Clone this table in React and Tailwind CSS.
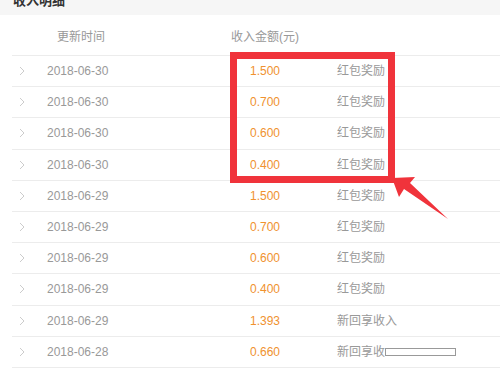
import React from "react";

const rows = [
  { date: "2018-06-30", amount: "1.500", label: "红包奖励" },
  { date: "2018-06-30", amount: "0.700", label: "红包奖励" },
  { date: "2018-06-30", amount: "0.600", label: "红包奖励" },
  { date: "2018-06-30", amount: "0.400", label: "红包奖励" },
  { date: "2018-06-29", amount: "1.500", label: "红包奖励" },
  { date: "2018-06-29", amount: "0.700", label: "红包奖励" },
  { date: "2018-06-29", amount: "0.600", label: "红包奖励" },
  { date: "2018-06-29", amount: "0.400", label: "红包奖励" },
  { date: "2018-06-29", amount: "1.393", label: "新回享收入" },
  { date: "2018-06-28", amount: "0.660", label: "新回享收", cut: true },
];

function Chevron() {
  return (
    <svg width="6" height="10" viewBox="0 0 6 10" className="shrink-0">
      <path d="M1 1 L5 5 L1 9" fill="none" stroke="#cccccc" strokeWidth="1" />
    </svg>
  );
}

export default function App() {
  return (
    <div
      className="relative w-[500px] h-[377px] overflow-hidden bg-white"
      style={{ fontFamily: '"Liberation Sans", "Noto Sans CJK SC", sans-serif' }}
    >
      {/* page title, scrolled mostly out of view */}
      <div className="h-[15px] bg-[#f6f6f6] overflow-hidden flex items-end">
        <span className="ml-[13px] mb-[8px] text-[13px] leading-[13px] font-bold text-[#333333]">
          收入明细
        </span>
      </div>

      <div className="ml-[12px] h-[41px] flex items-end pb-[10px] border-b border-[#ececec] text-[12px] leading-[16px] text-[#999999]">
        <span className="ml-[45px] w-[174px]">更新时间</span>
        <span>收入金额(元)</span>
      </div>

      {rows.map((r, i) => (
        <div
          key={i}
          className="ml-[12px] h-[31.2px] flex items-center border-b border-[#ececec] text-[12px] text-[#999999]"
        >
          <span className="ml-[7px] w-[28px] flex">
            <Chevron />
          </span>
          <span className="w-[203px]">{r.date}</span>
          <span className="w-[87px] text-[#f0922f]">{r.amount}</span>
          <span className="flex items-center">
            {r.label}
            {r.cut && (
              <span className="inline-block w-[71px] h-[8px] border border-[#999999] bg-white" />
            )}
          </span>
        </div>
      ))}

      {/* red highlight box */}
      <div className="absolute left-[230px] top-[52px] w-[165px] h-[131px] border-[7px] border-[#f0333b]" />

      {/* arrow */}
      <svg className="absolute left-0 top-0" width="500" height="377">
        <polygon
          points="392,178 415,177 410,183 448,219 404,189 399,197"
          fill="#f0333b"
        />
      </svg>
    </div>
  );
}
